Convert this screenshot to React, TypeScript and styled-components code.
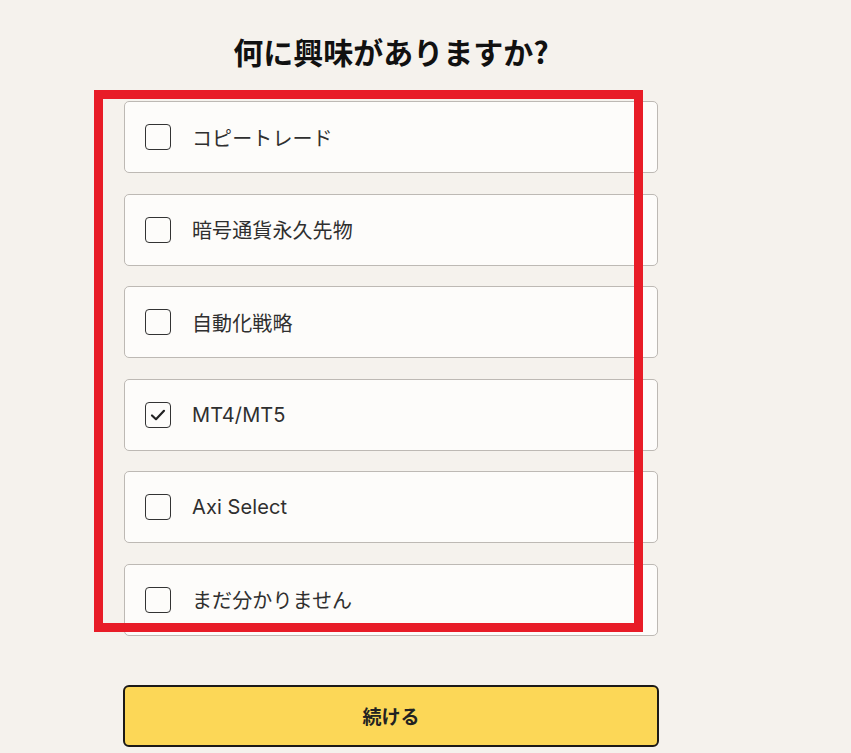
import React, { useState } from 'react';
import styled, { createGlobalStyle } from 'styled-components';

const GlobalStyle = createGlobalStyle`
  html, body {
    margin: 0;
    padding: 0;
    background: #f5f2ed;
  }
  * {
    box-sizing: border-box;
  }
`;

const options = [
  'コピートレード',
  '暗号通貨永久先物',
  '自動化戦略',
  'MT4/MT5',
  'Axi Select',
  'まだ分かりません',
];

const App: React.FC = () => {
  const [selected, setSelected] = useState<string[]>(['MT4/MT5']);

  const toggle = (label: string) => {
    setSelected(prev =>
      prev.includes(label) ? prev.filter(l => l !== label) : [...prev, label]
    );
  };

  return (
    <Page>
      <GlobalStyle />
      <Column>
        <Title>何に興味がありますか?</Title>
        <OptionList>
          {options.map(label => {
            const checked = selected.includes(label);
            return (
              <OptionCard key={label} onClick={() => toggle(label)}>
                <CheckBox $checked={checked}>
                  {checked && (
                    <svg width="18" height="18" viewBox="0 0 18 18" fill="none">
                      <path
                        d="M3 9.5 L7 13.2 L15 4.8"
                        stroke="#222"
                        strokeWidth="2.2"
                        strokeLinecap="round"
                        strokeLinejoin="round"
                      />
                    </svg>
                  )}
                </CheckBox>
                <OptionLabel>{label}</OptionLabel>
              </OptionCard>
            );
          })}
        </OptionList>
        <ContinueButton>続ける</ContinueButton>
      </Column>
      <Highlight />
    </Page>
  );
};

const Page = styled.div`
  position: relative;
  width: 851px;
  height: 753px;
  overflow: hidden;
  background: #f5f2ed;
  padding: 33px 0 0 123px;
  font-family: Inter, "Noto Sans CJK JP", sans-serif;
  color: #2b2b2b;
`;

const Column = styled.div`
  width: 536px;
  display: flex;
  flex-direction: column;
  align-items: stretch;
`;

const Title = styled.h1`
  margin: 0 0 32px;
  text-align: center;
  font-family: "Noto Sans CJK JP", sans-serif;
  font-size: 30px;
  line-height: 36px;
  font-weight: 700;
  color: #111;
`;

const OptionList = styled.div`
  display: flex;
  flex-direction: column;
  gap: 20.6px;
  padding: 0 1px;
`;

const OptionCard = styled.div`
  height: 72px;
  display: flex;
  align-items: center;
  gap: 21px;
  padding-left: 20px;
  background: #fdfcfa;
  border: 1px solid #bdb9b4;
  border-radius: 5px;
  cursor: pointer;
`;

const CheckBox = styled.span<{ $checked: boolean }>`
  width: 26px;
  height: 26px;
  flex-shrink: 0;
  display: flex;
  align-items: center;
  justify-content: center;
  border: 1.5px solid #333;
  border-radius: 4px;
  background: ${p => (p.$checked ? '#fdfcfa' : 'transparent')};
`;

const OptionLabel = styled.span`
  font-family: Inter, "Noto Sans CJK JP", sans-serif;
  font-size: 20px;
  letter-spacing: 0.1px;
  color: #2f2f2f;
`;

const ContinueButton = styled.button`
  margin-top: 49px;
  height: 62px;
  width: 536px;
  background: #fcd757;
  border: 2px solid #1c1a17;
  border-radius: 6px;
  font-family: "Noto Sans CJK JP", sans-serif;
  font-size: 19px;
  font-weight: 700;
  color: #222;
  cursor: pointer;
`;

const Highlight = styled.div`
  position: absolute;
  left: 94px;
  top: 90px;
  width: 549px;
  height: 542px;
  border: 9px solid #e81c27;
  pointer-events: none;
`;

export default App;
